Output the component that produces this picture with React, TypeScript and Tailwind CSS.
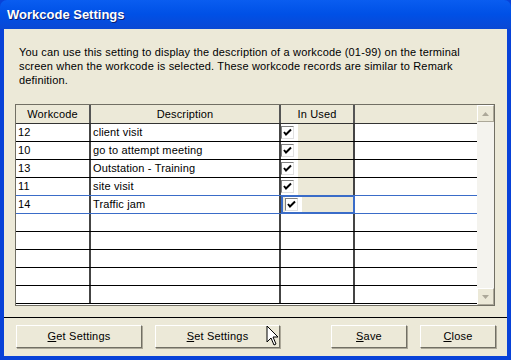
import React from "react";

const rows = [
  { code: "12", desc: "client visit" },
  { code: "10", desc: "go to attempt meeting" },
  { code: "13", desc: "Outstation - Training" },
  { code: "11", desc: "site visit" },
  { code: "14", desc: "Traffic jam", selected: true },
];

function Check() {
  return (
    <div className="w-[13px] h-[13px] bg-white border border-t-[#808080] border-l-[#808080] border-r-[#e0e0e0] border-b-[#e0e0e0] flex items-center justify-center">
      <svg width="9" height="9" viewBox="0 0 9 9">
        <path d="M1 4 L3 6.5 L8 1.5" stroke="#000" strokeWidth="2" fill="none" />
      </svg>
    </div>
  );
}

function Btn({ u, rest, w }: { u: string; rest: string; w: string }) {
  return (
    <div
      className={`${w} h-[23px] bg-[#ECE9D8] border border-t-white border-l-white border-r-[#716F64] border-b-[#716F64] shadow-[1px_1px_0_#ACA899] flex items-center justify-center text-[11px] tracking-[0.2px] text-black`}
    >
      <span>
        <span className="underline">{u}</span>
        {rest}
      </span>
    </div>
  );
}

export default function App() {
  const empty = [0, 1, 2, 3, 4];
  return (
    <div
      className="w-[511px] h-[360px] relative flex flex-col bg-[#0842D8] overflow-hidden"
      style={{ fontFamily: '"Liberation Sans", Arial, sans-serif' }}
    >
      <div className="h-[29px] shrink-0 bg-gradient-to-b from-[#0A5DF0] via-[#0050E6] to-[#0A48D4] rounded-t-[7px] flex items-center pl-[7px]">
        <span className="text-white font-bold text-[13px] [text-shadow:1px_1px_0_#0A1E70]">
          Workcode Settings
        </span>
      </div>
      <div className="flex-1 mx-[4px] mb-[4px] bg-[#ECE9D8] flex flex-col">
        <p className="pt-[16px] pl-[15px] w-[475px] text-[11px] leading-[14px] text-black tracking-[0.17px]">
          You can use this setting to display the description of a workcode (01-99) on the terminal screen when the workcode is selected. These workcode records are similar to Remark definition.
        </p>
        <div className="mt-[17px] ml-[11px] w-[480px] h-[202px] border border-[#716F64] bg-white flex">
          <div className="flex-1 flex flex-col">
            <div className="h-[19px] flex bg-[#ECE9D8] border-b border-[#333] text-[11px] tracking-[0.15px]">
              <div className="w-[75px] border-r-2 border-[#555] flex items-center justify-center">Workcode</div>
              <div className="w-[190px] border-r-2 border-[#555] flex items-center justify-center">Description</div>
              <div className="w-[74px] border-r-2 border-[#555] flex items-center justify-center">In Used</div>
              <div className="flex-1" />
            </div>
            {rows.map((r, i) => {
              const nextSel = rows[i + 1]?.selected;
              const lineColor = r.selected || nextSel ? "border-[#3A6CC8]" : "border-black";
              return (
                <div key={i} className={`h-[18px] flex border-b ${lineColor} text-[11px] tracking-[0.15px]`}>
                  <div className="w-[75px] border-r-2 border-[#444] pl-[2px] flex items-center">{r.code}</div>
                  <div className="w-[190px] border-r-2 border-[#444] pl-[2px] flex items-center">{r.desc}</div>
                  <div
                    className={`w-[74px] bg-[#ECE9D8] flex items-center ${
                      r.selected ? "border-2 border-[#3A6CC8] -mt-[1px] h-[19px] pl-[2px]" : "border-r-2 border-[#444]"
                    }`}
                  >
                    <div className="bg-white h-full flex items-center pr-[4px]">
                      <Check />
                    </div>
                  </div>
                  <div className="flex-1" />
                </div>
              );
            })}
            {empty.map((i) => (
              <div key={i} className="h-[18px] flex border-b border-black">
                <div className="w-[75px] border-r-2 border-[#444]" />
                <div className="w-[190px] border-r-2 border-[#444]" />
                <div className="w-[74px] border-r-2 border-[#444]" />
                <div className="flex-1" />
              </div>
            ))}
          </div>
          <div className="w-[17px] flex flex-col bg-[#F4F3EE]">
            <div className="h-[17px] bg-[#ECE9D8] border border-t-white border-l-white border-r-[#ACA899] border-b-[#ACA899] flex items-center justify-center">
              <svg width="7" height="4" viewBox="0 0 7 4">
                <path d="M3.5 0 L7 4 L0 4 Z" fill="#ACA899" />
              </svg>
            </div>
            <div className="flex-1" />
            <div className="h-[17px] bg-[#ECE9D8] border border-t-white border-l-white border-r-[#ACA899] border-b-[#ACA899] flex items-center justify-center">
              <svg width="7" height="4" viewBox="0 0 7 4">
                <path d="M0 0 L7 0 L3.5 4 Z" fill="#ACA899" />
              </svg>
            </div>
          </div>
        </div>
        <div className="mt-[11px] border-t border-black" />
        <div className="mt-[7px] pl-[12px] flex">
          <Btn u="G" rest="et Settings" w="w-[126px]" />
          <div className="ml-[13px]">
            <Btn u="S" rest="et Settings" w="w-[125px]" />
          </div>
          <div className="ml-[51px]">
            <Btn u="S" rest="ave" w="w-[76px]" />
          </div>
          <div className="ml-[13px]">
            <Btn u="C" rest="lose" w="w-[76px]" />
          </div>
        </div>
      </div>
      <svg className="absolute left-[266px] top-[325px]" width="14" height="22" viewBox="0 0 14 22">
        <path d="M1 1 L1 17 L5 13 L8 20 L10 19 L7 12 L12 12 Z" fill="#fff" stroke="#000" strokeWidth="1" />
      </svg>
    </div>
  );
}
